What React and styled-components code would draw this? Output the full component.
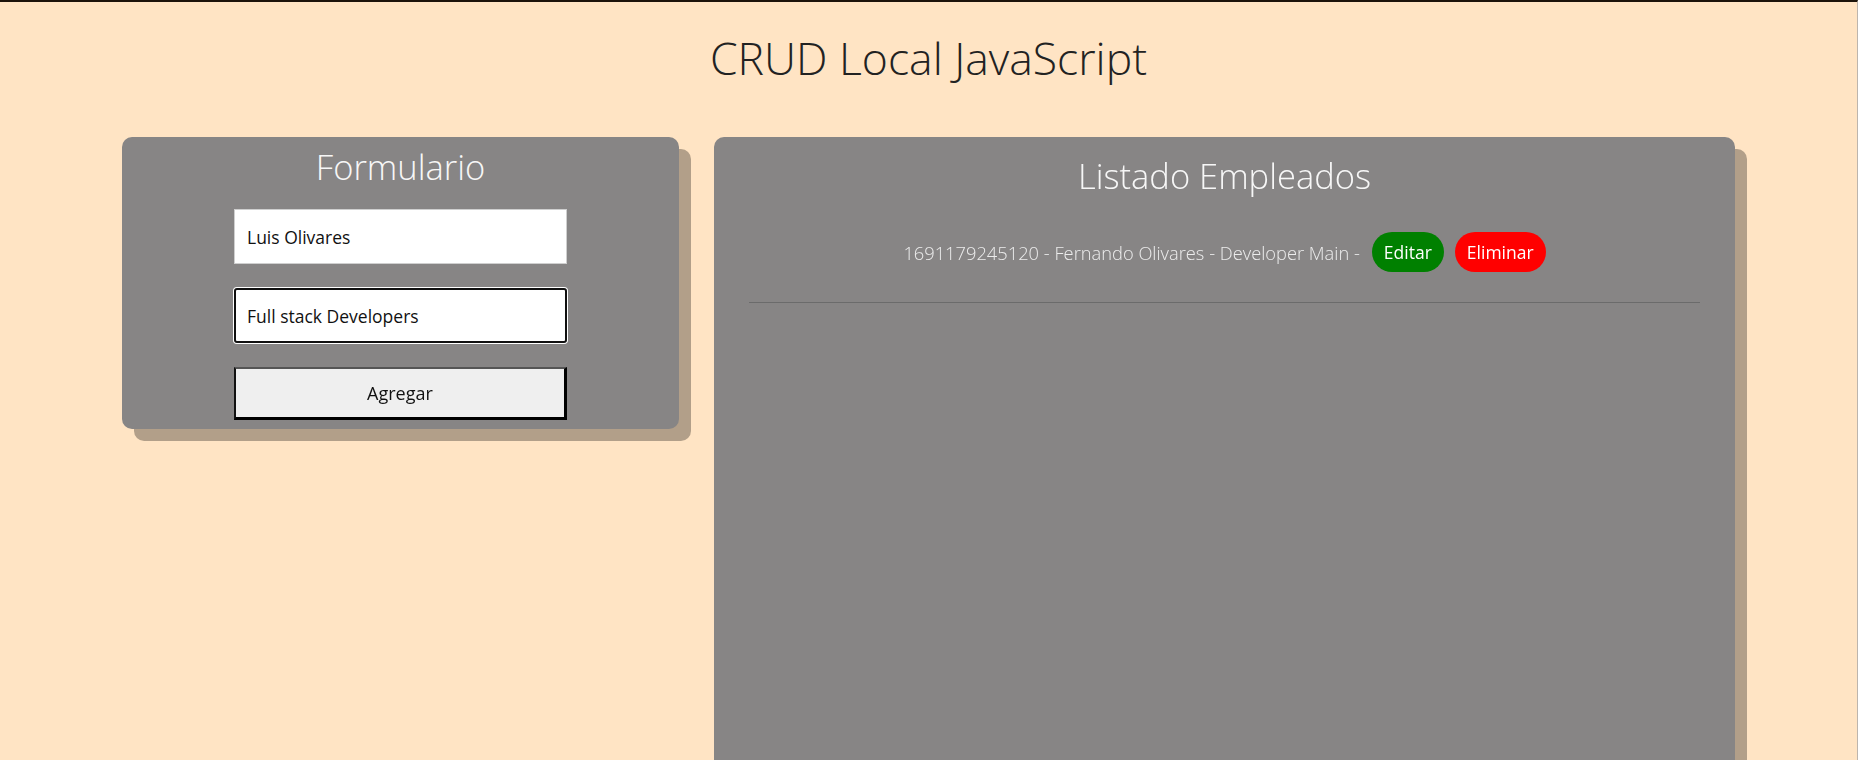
import React, { useEffect, useRef } from "react"
import styled, { createGlobalStyle } from "styled-components"

const GlobalStyle = createGlobalStyle`
  html, body {
    margin: 0;
    padding: 0;
    background-color: #ffe4c4;
  }

  body {
    font-family: "Open Sans", "Noto Sans", sans-serif;
  }

  * {
    box-sizing: border-box;
  }
`

const empleados = [
  { id: 1691179245120, nombre: "Fernando Olivares", puesto: "Developer Main" },
]

export default function App() {
  const puestoRef = useRef(null)

  // deja el cursor al final del segundo campo, como en la captura
  useEffect(() => {
    const el = puestoRef.current
    if (el) {
      el.focus()
      const n = el.value.length
      el.setSelectionRange(n, n)
    }
  }, [])

  return (
    <Page>
      <GlobalStyle />
      <Title>CRUD Local JavaScript</Title>

      <Main>
        <FormCard>
          <CardTitle>Formulario</CardTitle>
          <Form onSubmit={(e) => e.preventDefault()}>
            <Input defaultValue="Luis Olivares" placeholder="Nombre" />
            <Input
              ref={puestoRef}
              defaultValue="Full stack Developers"
              placeholder="Puesto"
              $active
            />
            <SubmitButton type="submit">Agregar</SubmitButton>
          </Form>
        </FormCard>

        <ListCard>
          <CardTitle $list>Listado Empleados</CardTitle>
          <List>
            {empleados.map((emp) => (
              <Row key={emp.id}>
                <RowText>
                  {emp.id} - {emp.nombre} - {emp.puesto} -
                </RowText>
                <Pill $color="#008000">Editar</Pill>
                <Pill $color="#ff0000">Eliminar</Pill>
              </Row>
            ))}
          </List>
          <Divider />
        </ListCard>
      </Main>
    </Page>
  )
}

const Page = styled.div`
  min-height: 100vh;
  border-top: 2px solid #1c130a;
  border-right: 1px solid #bdb5ad;
`

const Title = styled.h1`
  margin: 24px 0 47px;
  font-size: 44.5px;
  line-height: 64px;
  font-weight: 300;
  color: #222;
  text-align: center;
`

const Main = styled.main`
  display: grid;
  grid-template-columns: 557px 1021px;
  justify-content: center;
  align-items: start;
  gap: 35px;
`

const Card = styled.section`
  background-color: #878585;
  border-radius: 10px;
  box-shadow: 12px 12px 0 rgba(0, 0, 0, 0.3);
`

const FormCard = styled(Card)`
  padding-bottom: 9px;
`

const ListCard = styled(Card)`
  min-height: 700px;
`

const CardTitle = styled.h2`
  margin: ${(props) => (props.$list ? "15px" : "6px")} 0 0;
  font-size: 34.5px;
  line-height: 48px;
  font-weight: 300;
  color: #f7f7f7;
  text-align: center;
`

const Form = styled.form`
  display: flex;
  flex-direction: column;
  align-items: center;
  gap: 24px;
  margin-top: 18px;
`

const Input = styled.input`
  width: 333px;
  height: 55px;
  padding: 0 ${(props) => (props.$active ? "11px" : "12px")};
  font-family: inherit;
  font-size: 17.5px;
  color: #111;
  background-color: #fff;
  border: ${(props) => (props.$active ? "2px solid #101010" : "1px solid #cfcfcf")};
  border-radius: ${(props) => (props.$active ? "3px" : "0")};
  box-shadow: ${(props) => (props.$active ? "0 0 0 1px #fff" : "none")};
  outline: none;
  caret-color: #000;
`

const SubmitButton = styled.button`
  width: 333px;
  height: 53px;
  font-family: inherit;
  font-size: 18px;
  color: #111;
  background-color: #efefef;
  border-style: solid;
  border-width: 2px 3px 3px 2px;
  border-color: #555 #000 #000 #111;
  cursor: pointer;
`

const List = styled.ul`
  list-style: none;
  margin: 32px 0 0;
  padding: 0;
`

const Row = styled.li`
  display: flex;
  justify-content: center;
  align-items: center;
  gap: 11px;
`

const RowText = styled.span`
  margin-right: 1px;
  font-size: 18.3px;
  font-weight: 300;
  color: #ececec;
`

const Pill = styled.button`
  height: 40px;
  padding: 0 12px;
  font-family: inherit;
  font-size: 17.5px;
  color: #fff;
  background-color: ${(props) => props.$color};
  border: none;
  border-radius: 20px;
  cursor: pointer;
`

const Divider = styled.hr`
  margin: 30px 35px 0;
  border: none;
  border-top: 1px solid #6b6b6b;
`
